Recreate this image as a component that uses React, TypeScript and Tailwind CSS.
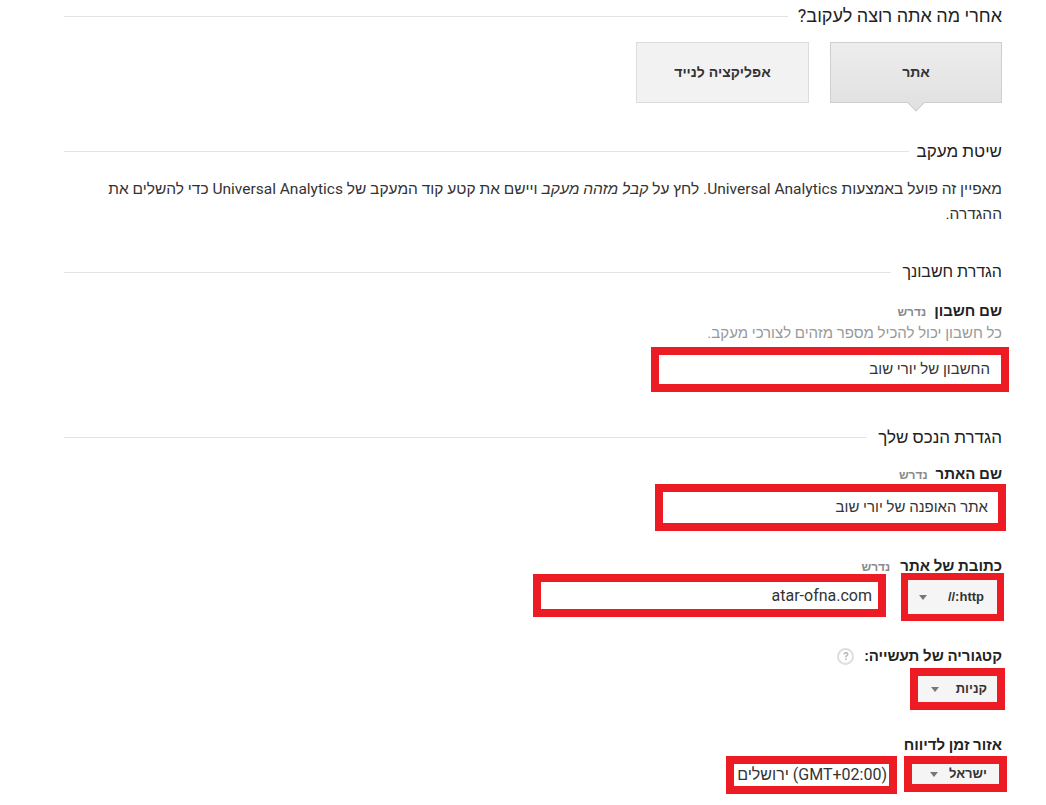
import React from "react";

const Caret = () => (
  <span className="inline-block w-0 h-0 border-l-[4px] border-r-[4px] border-t-[5px] border-l-transparent border-r-transparent border-t-[#777]" />
);

const SectionTitle = ({ text, size = "text-[16px]", gap = "gap-[9px]" }: { text: string; size?: string; gap?: string }) => (
  <div className={`flex items-center ${gap}`}>
    <h2 className={`${size} leading-[22px] text-[#222] whitespace-nowrap font-normal`}>{text}</h2>
    <div className="flex-1 h-px bg-[#e3e3e3]" />
  </div>
);

const Required = () => <span className="text-[12px] font-bold text-[#8a8a8a]">נדרש</span>;

const selectFont = "text-[13px] font-bold text-[#333] font-['Liberation_Sans',Arial,sans-serif]";

export default function App() {
  return (
    <div
      dir="rtl"
      className="w-[1046px] h-[805px] overflow-hidden bg-white pl-[64px] pr-[44px] text-[#333] font-[Roboto,'Liberation_Sans',Arial,sans-serif]"
    >
      {/* What to track */}
      <div className="pt-[5px]">
        <SectionTitle text="אחרי מה אתה רוצה לעקוב?" size="text-[18px]" gap="gap-[10px]" />
      </div>

      <div className="mt-[15px] flex gap-[21px]">
        <div className="relative w-[172px] h-[61px] border border-[#cfcfcf] bg-gradient-to-b from-[#ededed] to-[#e2e2e2] flex items-center justify-center">
          <span className="text-[14px] font-bold text-[#333] font-['Liberation_Sans',Arial,sans-serif]">אתר</span>
          <div className="absolute left-1/2 -translate-x-1/2 bottom-[-7px] w-[12px] h-[12px] rotate-45 bg-[#e2e2e2] border-r border-b border-[#cfcfcf]" />
        </div>
        <div className="w-[173px] h-[61px] border border-[#dcdcdc] bg-[#f2f2f2] flex items-center justify-center">
          <span className="text-[14px] font-bold text-[#333] font-['Liberation_Sans',Arial,sans-serif]">אפליקציה לנייד</span>
        </div>
      </div>

      {/* Tracking method */}
      <div className="mt-[37px]">
        <SectionTitle text="שיטת מעקב" size="text-[17px]" gap="gap-[8px]" />
      </div>
      <p className="mt-[15px] text-[15.5px] leading-[25px] text-[#333] pl-[36px]">
        מאפיין זה פועל באמצעות Universal Analytics. לחץ על <em>קבל מזהה מעקב</em> ויישם את קטע קוד המעקב של Universal Analytics כדי להשלים את ההגדרה.
      </p>

      {/* Account setup */}
      <div className="mt-[34px]">
        <SectionTitle text="הגדרת חשבונך" gap="gap-[11px]" />
      </div>
      <div className="mt-[18px] flex items-baseline gap-[8px] leading-[20px]">
        <span className="text-[15px] font-bold text-[#222] min-w-[66px]">שם חשבון</span>
        <Required />
      </div>
      <div className="mt-[1px] text-[15px] leading-[20px] text-[#999]">כל חשבון יכול להכיל מספר מזהים לצורכי מעקב.</div>
      <div className="mt-[4px] mr-[-7px] w-[358px] h-[45px] border-[8px] border-[#ed1c24] bg-white flex items-center pr-[11px]">
        <span className="text-[15px] text-[#333]">החשבון של יורי שוב</span>
      </div>

      {/* Property setup */}
      <div className="mt-[34px]">
        <SectionTitle text="הגדרת הנכס שלך" size="text-[17px]" gap="gap-[11px]" />
      </div>
      <div className="mt-[16px] flex items-baseline gap-[8px] leading-[20px]">
        <span className="text-[15px] font-bold text-[#222] min-w-[66px]">שם האתר</span>
        <Required />
      </div>
      <div className="mt-[-1px] mr-[-4px] w-[351px] h-[47px] border-[8px] border-[#ed1c24] bg-white flex items-center pr-[10px]">
        <span className="text-[15px] text-[#333]">אתר האופנה של יורי שוב</span>
      </div>

      <div className="mt-[25px] flex items-baseline gap-[10px] leading-[20px]">
        <span className="text-[15px] font-bold text-[#222]">כתובת של אתר</span>
        <Required />
      </div>
      <div className="mt-[-4px] flex items-start mr-[-2px] gap-[15px]">
        <div className="w-[103px] h-[48px] border-[7px] border-[#ed1c24] bg-[#f5f5f5]">
          <div className="h-full flex items-center justify-between pr-[13px] pl-[11px]">
            <span className={selectFont}>http://</span>
            <Caret />
          </div>
        </div>
        <div className="mt-[1px] w-[353px] h-[43px] border-[8px] border-[#ed1c24] bg-white flex items-center pr-[6px]">
          <span className="text-[16px] text-[#333]">atar-ofna.com</span>
        </div>
      </div>

      {/* Industry category */}
      <div className="mt-[25px] flex items-center gap-[10px] leading-[20px]">
        <span className="text-[15px] font-bold text-[#222]">קטגוריה של תעשייה:</span>
        <span className="w-[17px] h-[17px] rounded-full border-2 border-[#dedede] flex items-center justify-center text-[11px] font-bold text-[#b5b5b5] leading-none">?</span>
      </div>
      <div className="mt-[2px] mr-[-3px] w-[95px] h-[42px] border-[8px] border-[#ed1c24] bg-[#f5f5f5]">
        <div className="h-full flex items-center justify-between pr-[10px] pl-[13px]">
          <span className={selectFont}>קניות</span>
          <Caret />
        </div>
      </div>

      {/* Time zone */}
      <div className="mt-[25px] leading-[20px]">
        <span className="text-[15px] font-bold text-[#222]">אזור זמן לדיווח</span>
      </div>
      <div className="mt-[1px] flex items-start mr-[-5px] gap-[7px]">
        <div className="w-[103px] h-[36px] border-[8px] border-[#ed1c24] bg-[#f5f5f5]">
          <div className="h-full flex items-center justify-between pr-[12px] pl-[18px]">
            <span className={selectFont}>ישראל</span>
            <Caret />
          </div>
        </div>
        <div className="w-[171px] h-[38px] border-[8px] border-[#ed1c24] bg-white flex items-center pr-[2px]">
          <span className="text-[16px] text-[#333]">(GMT+02:00) ירושלים</span>
        </div>
      </div>
    </div>
  );
}
